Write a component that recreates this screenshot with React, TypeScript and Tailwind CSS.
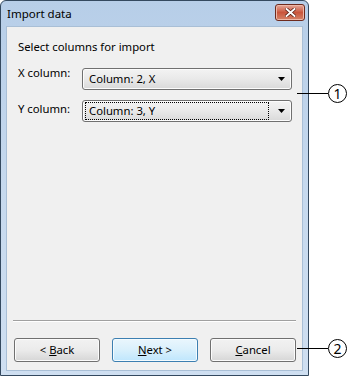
import React from "react";

const font = { fontFamily: '"Noto Sans", "Open Sans", sans-serif' };

function Arrow() {
  return (
    <svg width="7" height="4" viewBox="0 0 7 4" className="block">
      <path d="M0 0 H7 L3.5 4 Z" fill="#000" />
    </svg>
  );
}

function Combo({ text, focused }: { text: string; focused?: boolean }) {
  return (
    <div className="w-[210px] h-[22px] rounded-[3px] border border-[#707070] bg-gradient-to-b from-[#f3f3f3] via-[#e9e9e9] to-[#d9d9d9] flex items-center pl-[2px] pr-[6px] shadow-[inset_0_0_0_1px_#fcfcfc]">
      <div
        className={
          "flex-1 h-[18px] flex items-center pl-[3px] text-[11.3px] text-black leading-none " +
          (focused ? "border border-dotted border-black" : "border border-transparent")
        }
      >
        {text}
      </div>
      <div className="w-[16px] flex justify-end">
        <Arrow />
      </div>
    </div>
  );
}

function Btn({ children, def }: { children: React.ReactNode; def?: boolean }) {
  return (
    <div
      className={
        "w-[86px] h-[24px] rounded-[3px] border flex items-center justify-center text-[11.3px] text-black leading-none " +
        (def
          ? "border-[#3c7fb1] bg-gradient-to-b from-[#eaf6fd] via-[#d9f0fc] to-[#bee6fd] shadow-[inset_0_0_0_1px_#f4fbfe]"
          : "border-[#707070] bg-gradient-to-b from-[#f2f2f2] via-[#ebebeb] to-[#d6d6d6] shadow-[inset_0_0_0_1px_#fbfbfb]")
      }
    >
      {children}
    </div>
  );
}

function Callout({ n }: { n: string }) {
  return (
    <div className="flex items-center">
      <div className="w-[31px] h-[1px] bg-black" />
      <div className="w-[19px] h-[19px] rounded-full border border-black bg-white flex items-center justify-center text-[14px] leading-none text-black">
        {n}
      </div>
    </div>
  );
}

export default function App() {
  return (
    <div className="relative w-[350px] h-[376px] bg-white overflow-hidden" style={font}>
      <div className="w-[309px] h-[376px] border border-[#34495f] rounded-t-[6px] bg-gradient-to-b from-[#b7cee8] via-[#c6d9ee] to-[#cfdff1] flex flex-col">
        {/* title bar */}
        <div className="h-[25px] flex items-start justify-between pl-[6px] pr-[3px]">
          <div className="text-[11.5px] text-black leading-none mt-[7px]">Import data</div>
          <div className="mt-[3px] w-[30px] h-[17px] rounded-[3px] border border-[#6e2a1d] bg-gradient-to-b from-[#e4a89a] via-[#c9553c] to-[#d58368] flex items-center justify-center shadow-[inset_0_0_0_1px_#eeb8a8]">
            <svg width="11" height="9" viewBox="0 0 11 9">
              <path d="M1.5 1 L9.5 8 M9.5 1 L1.5 8" stroke="#5a1f14" strokeWidth="3.4" strokeLinecap="square" />
              <path d="M1.5 1 L9.5 8 M9.5 1 L1.5 8" stroke="#ffffff" strokeWidth="1.9" strokeLinecap="square" />
            </svg>
          </div>
        </div>
        {/* client */}
        <div className="flex-1 mx-[5px] mb-[4px] bg-[#f0f0f0] border border-[#a9bfd6] flex flex-col">
          <div className="ml-[11px] mt-[12px] text-[11.3px] leading-[16px] text-black">Select columns for import</div>
          <div className="flex mt-[13px] ml-[11px]">
            <div className="w-[64px] text-[11.3px] leading-[16px] text-black -mt-[3px]">X column:</div>
            <Combo text="Column: 2, X" />
          </div>
          <div className="flex mt-[10px] ml-[11px]">
            <div className="w-[64px] text-[11.3px] leading-[16px] text-black pt-[1px]">Y column:</div>
            <Combo text="Column: 3, Y" focused />
          </div>
          <div className="flex-1" />
          <div className="mx-[6px] h-[1px] bg-[#a0a0a0] border-b border-white box-content" />
          <div className="flex gap-[12px] ml-[7px] mt-[16px] mb-[8px]">
            <Btn>
              &lt; <span className="underline ml-[3px]">B</span>ack
            </Btn>
            <Btn def>
              <span className="underline">N</span>ext &gt;
            </Btn>
            <Btn>
              <span className="underline">C</span>ancel
            </Btn>
          </div>
        </div>
      </div>
      <div className="absolute left-[297px] top-[84px]">
        <Callout n="1" />
      </div>
      <div className="absolute left-[297px] top-[339px]">
        <Callout n="2" />
      </div>
    </div>
  );
}
